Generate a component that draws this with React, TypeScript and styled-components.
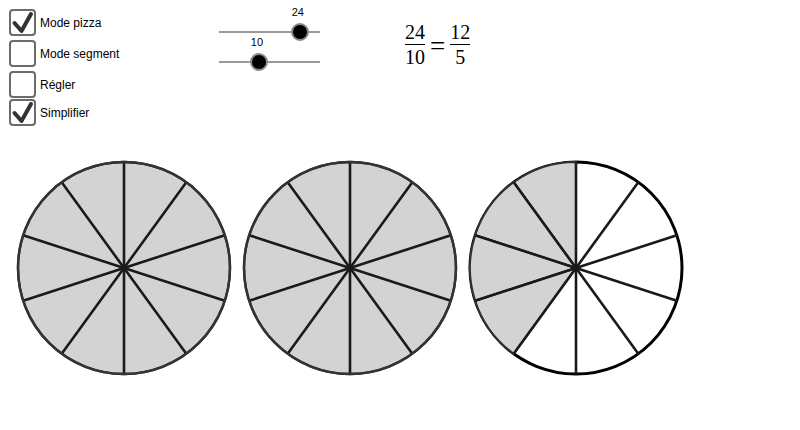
import React from "react";
import styled, { createGlobalStyle } from "styled-components";

const Global = createGlobalStyle`
  html, body { margin: 0; padding: 0; background: #fff; }
  body { font-family: "Liberation Sans", Arial, sans-serif; width: 800px; height: 430px; overflow: hidden; color: #000; }
`;

const Page = styled.div`
  width: 800px;
  height: 430px;
  display: flex;
  flex-direction: column;
`;

const Top = styled.div`
  display: flex;
  align-items: flex-start;
  height: 159px;
`;

const Checks = styled.div`
  display: flex;
  flex-direction: column;
  padding: 9px 0 0 9px;
  width: 210px;
`;

const Row = styled.label<{ $gap: number }>`
  display: flex;
  align-items: center;
  gap: 4px;
  margin-top: ${(p) => p.$gap}px;
  font-size: 12px;
  color: #000;
  height: 27px;
`;

const Box = styled.span`
  box-sizing: border-box;
  width: 27px;
  height: 27px;
  border: 2px solid #6b6b6b;
  border-radius: 4px;
  background: #fff;
  display: flex;
  align-items: center;
  justify-content: center;
`;

const Sliders = styled.div`
  display: flex;
  flex-direction: column;
  width: 101px;
  margin-top: 6px;
`;

const SliderWrap = styled.div`
  position: relative;
  height: 30px;
`;

const Track = styled.div`
  position: absolute;
  left: 0;
  right: 0;
  bottom: 3px;
  height: 2px;
  background: #999;
`;

const Thumb = styled.div`
  position: absolute;
  bottom: -5px;
  width: 14px;
  height: 14px;
  margin-left: -9px;
  border-radius: 50%;
  background: #000;
  border: 2px solid #8a8a8a;
`;

const Value = styled.span`
  position: absolute;
  top: 0;
  font-size: 11px;
  color: #000;
  transform: translateX(-50%);
  line-height: 13px;
`;

const Formula = styled.div`
  display: flex;
  align-items: center;
  margin: 22px 0 0 85px;
  font-family: "Liberation Serif", "Times New Roman", serif;
  font-size: 20px;
  color: #000;
  gap: 5px;
`;

const Frac = styled.span`
  display: inline-flex;
  flex-direction: column;
  align-items: center;
  line-height: 21px;
`;

const Bar = styled.span`
  align-self: stretch;
  height: 1px;
  background: #000;
  margin: 1px 0 2px;
`;

const Eq = styled.span`
  font-size: 27px;
  line-height: 20px;
  padding-top: 1px;
`;

const Pies = styled.div`
  display: flex;
  gap: 8px;
  padding-left: 15px;
`;

const Check = () => (
  <svg width="23" height="23" viewBox="0 0 23 23">
    <path d="M3.5 12 L10.5 20 L20 3" fill="none" stroke="#333" strokeWidth="4" strokeLinecap="round" strokeLinejoin="round" />
  </svg>
);

type PieProps = { parts: number; filled: number };

const Pie = ({ parts, filled }: PieProps) => {
  const c = 109;
  const r = 106;
  const pt = (a: number) => [c + r * Math.sin(a), c - r * Math.cos(a)];
  const full = filled >= parts;
  const sectors = [];
  for (let i = 0; i < filled && !full; i++) {
    const a0 = (-(i + 1) * 2 * Math.PI) / parts;
    const a1 = (-i * 2 * Math.PI) / parts;
    const [x0, y0] = pt(a0);
    const [x1, y1] = pt(a1);
    sectors.push(
      <path key={i} d={`M${c} ${c} L${x0} ${y0} A${r} ${r} 0 0 1 ${x1} ${y1} Z`} fill="#d3d3d3" stroke="#333" strokeWidth="2" />
    );
  }
  const lines = [];
  for (let i = 0; i < parts; i++) {
    const [x, y] = pt((i * 2 * Math.PI) / parts);
    lines.push(<line key={i} x1={c} y1={c} x2={x} y2={y} stroke="#1a1a1a" strokeWidth="2.6" />);
  }
  return (
    <svg width="218" height="218" viewBox="0 0 218 218">
      <circle cx={c} cy={c} r={r} fill={full ? "#d3d3d3" : "#fff"} stroke={full ? "#333" : "#000"} strokeWidth={full ? 2.4 : 3} />
      {sectors}
      {lines}
      {full && <circle cx={c} cy={c} r={r} fill="none" stroke="#333" strokeWidth="2.4" />}
    </svg>
  );
};

const Slider = ({ value, frac }: { value: number; frac: number }) => (
  <SliderWrap>
    <Track />
    <Thumb style={{ left: `${frac * 100}%` }} />
    <Value style={{ left: `${frac * 100 - 2}%` }}>{value}</Value>
  </SliderWrap>
);

const items = [
  { label: "Mode pizza", checked: true, gap: 0 },
  { label: "Mode segment", checked: false, gap: 4 },
  { label: "Régler", checked: false, gap: 4 },
  { label: "Simplifier", checked: true, gap: 1 },
];

export default function App() {
  return (
    <Page>
      <Global />
      <Top>
        <Checks>
          {items.map((it) => (
            <Row key={it.label} $gap={it.gap}>
              <Box>{it.checked && <Check />}</Box>
              {it.label}
            </Row>
          ))}
        </Checks>
        <Sliders>
          <Slider value={24} frac={0.8} />
          <Slider value={10} frac={0.396} />
        </Sliders>
        <Formula>
          <Frac>
            <span>24</span>
            <Bar />
            <span>10</span>
          </Frac>
          <Eq>=</Eq>
          <Frac>
            <span>12</span>
            <Bar />
            <span>5</span>
          </Frac>
        </Formula>
      </Top>
      <Pies>
        <Pie parts={10} filled={10} />
        <Pie parts={10} filled={10} />
        <Pie parts={10} filled={4} />
      </Pies>
    </Page>
  );
}
